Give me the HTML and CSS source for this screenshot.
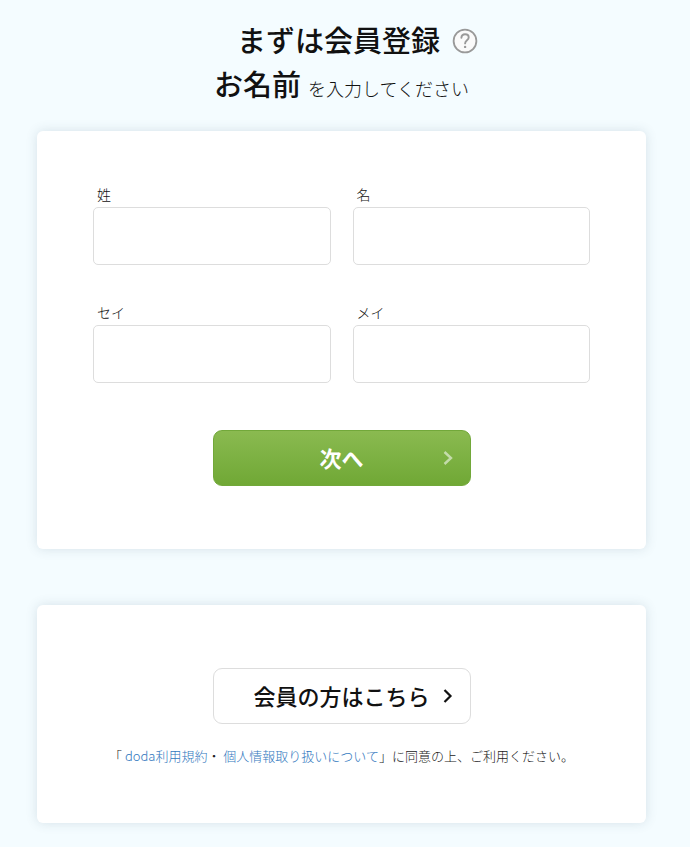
FILE: index.html
```html
<!DOCTYPE html>
<html lang="ja">
  <head>
    <meta charset="UTF-8" />
    <meta name="viewport" content="width=device-width, initial-scale=1.0" />
    <title>会員登録</title>
    <link rel="stylesheet" href="styles.css">
  </head>
  <body>
    <header class="page-header">
      <h1 class="title">
        まずは会員登録
        <button type="button" class="help-btn" aria-label="ヘルプ">
          <svg width="26" height="26" viewBox="0 0 26 26" fill="none" stroke="#999" stroke-linecap="round">
            <circle cx="13" cy="13" r="11.4" stroke-width="1.8" fill="#fafafa" />
            <path d="M9.4 9.8C9.5 7.4 11.1 6.2 13.1 6.2C15.2 6.2 16.7 7.5 16.7 9.4C16.7 12.2 13.1 12.2 13.1 15.4" stroke-width="1.9" />
            <circle cx="13.1" cy="18.9" r="1.2" fill="#999" stroke="none" />
          </svg>
        </button>
      </h1>
      <p class="lead"><strong>お名前</strong> を入力してください</p>
    </header>

    <main>
      <form class="card">
        <div class="fields">
          <div class="field">
            <label for="last_name">姓</label>
            <input type="text" id="last_name" name="last_name" />
          </div>
          <div class="field">
            <label for="first_name">名</label>
            <input type="text" id="first_name" name="first_name" />
          </div>
          <div class="field">
            <label for="last_kana">セイ</label>
            <input type="text" id="last_kana" name="last_kana" />
          </div>
          <div class="field">
            <label for="first_kana">メイ</label>
            <input type="text" id="first_kana" name="first_kana" />
          </div>
        </div>
        <button type="submit" class="btn next-btn">
          <span>次へ</span>
          <svg width="10" height="16" viewBox="0 0 10 16" fill="none" stroke="currentColor" stroke-width="2.4">
            <path d="M1.5 2L8 8L1.5 14" />
          </svg>
        </button>
      </form>

      <section class="card member-card">
        <a href="#" class="btn member-btn">
          <span>会員の方はこちら</span>
          <svg width="10" height="16" viewBox="0 0 10 16" fill="none" stroke="currentColor" stroke-width="2.2">
            <path d="M1.5 2L7.5 8L1.5 14" />
          </svg>
        </a>
        <p class="terms">「 <a href="#">doda利用規約</a>・ <a href="#">個人情報取り扱いについて</a>」に同意の上、ご利用ください。</p>
      </section>
    </main>
  </body>
</html>
```

FILE: styles.css
```css
* {
  box-sizing: border-box;
}
body {
  margin: 0;
  padding: 17px 44px 24px 37px;
  background-color: #f4fcff;
  color: #111;
  font-family: "Noto Sans CJK JP", sans-serif;
}
.page-header {
  margin-bottom: 21px;
}
.title {
  display: flex;
  align-items: center;
  justify-content: center;
  gap: 12px;
  margin: 0;
  padding-left: 32px;
  font-size: 29px;
  font-weight: 500;
  line-height: 44px;
}
.help-btn {
  display: flex;
  padding: 4px 0 0;
  border: none;
  background: none;
  cursor: pointer;
}
.lead {
  margin: 0;
  text-align: center;
  font-size: 18px;
  font-weight: 300;
  line-height: 44px;
}
.lead strong {
  margin-right: 3px;
  font-size: 29px;
  font-weight: 500;
}
.card {
  padding: 52px 56px 63px;
  border-radius: 6px;
  background-color: #fff;
  box-shadow: 0 0 12px rgba(60, 90, 110, 0.16);
}
.fields {
  display: grid;
  grid-template-columns: 1fr 1fr;
  gap: 36px 22px;
}
.field {
  display: flex;
  flex-direction: column;
}
.field label {
  padding: 0 0 2px 4px;
  font-size: 14px;
  font-weight: 300;
  line-height: 22px;
}
.field input {
  width: 100%;
  height: 58px;
  padding: 0 12px;
  border: 1px solid #ddd;
  border-radius: 5px;
  background-color: #fff;
  font-family: inherit;
  font-size: 18px;
}
.btn {
  display: flex;
  align-items: center;
  width: 258px;
  height: 56px;
  margin: 0 auto;
  border-radius: 9px;
  font-family: inherit;
  font-size: 22px;
  font-weight: 500;
  line-height: 32px;
  cursor: pointer;
}
.btn span {
  padding-bottom: 2px;
}
.next-btn {
  margin-top: 47px;
  padding: 0 17px 0 27px;
  border: 1px solid #72a83a;
  background: linear-gradient(#8aba50, #70a835);
  color: #fff;
  font-weight: 700;
}
.next-btn span {
  flex: 1;
}
.next-btn svg {
  opacity: 0.55;
}
.member-card {
  margin-top: 56px;
  padding: 63px 56px 55px;
}
.member-btn {
  justify-content: flex-end;
  gap: 13px;
  padding-right: 17px;
  border: 1px solid #ddd;
  background-color: #fff;
  color: #111;
  text-decoration: none;
}
.terms {
  margin: 20px 0 0;
  text-align: center;
  color: #222;
  font-size: 13px;
  font-weight: 300;
  line-height: 24px;
}
.terms a {
  color: #3178be;
  text-decoration: none;
}
```
